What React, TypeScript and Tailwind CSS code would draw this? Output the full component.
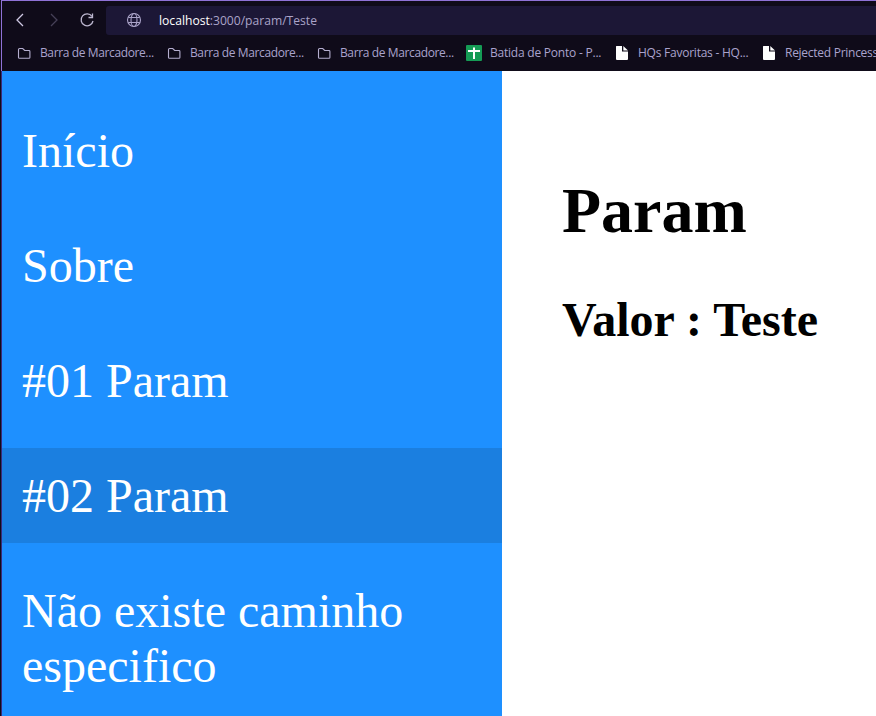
import React from "react";

type IconKind = "folder" | "sheet" | "file";

interface Bookmark {
  label: string;
  icon: IconKind;
  box: string;
  text: string;
}

const bookmarks: Bookmark[] = [
  { label: "Barra de Marcadore...", icon: "folder", box: "w-[150px]", text: "ml-2 tracking-[-0.38px]" },
  { label: "Barra de Marcadore...", icon: "folder", box: "w-[150px]", text: "ml-2 tracking-[-0.38px]" },
  { label: "Barra de Marcadore...", icon: "folder", box: "w-[150px]", text: "ml-2 tracking-[-0.38px]" },
  { label: "Batida de Ponto - P...", icon: "sheet", box: "w-[148px]", text: "ml-2 tracking-[-0.22px]" },
  { label: "HQs Favoritas - HQ...", icon: "file", box: "w-[147px]", text: "ml-[9px] tracking-[-0.24px]" },
  { label: "Rejected Princess", icon: "file", box: "w-[147px]", text: "ml-[9px] tracking-[-0.27px]" },
];

const links = ["Início", "Sobre", "#01 Param", "#02 Param", "Não existe caminho especifico"];

function BookmarkIcon({ kind }: { kind: IconKind }) {
  if (kind === "folder") {
    return (
      <svg className="h-4 w-4 shrink-0" viewBox="0 0 16 16" fill="none" stroke="#b5afd0" strokeWidth="1.1">
        <path d="M2.500 12.500v-8q0-1 1-1h3.200l2 2h4.300q.9 0 .9.9v6q0 .9-.9.9H3.500q-1 0-1-.8Z" />
      </svg>
    );
  }
  if (kind === "sheet") {
    return (
      <svg className="h-4 w-4 shrink-0" viewBox="0 0 16 16">
        <rect width="16" height="16" rx="1" fill="#159b55" />
        <path d="M2 5h12v2H9v7H7V7H2ZM7 2.500h2V6H7Z" fill="#fff" />
      </svg>
    );
  }
  return (
    <svg className="h-4 w-[15px] shrink-0" viewBox="0 0 15 16">
      <path d="M2.500 1H8v5.500h6V14q0 1-1 1H3q-1 0-1-1V1.500q0-.5.5-.5Z" fill="#fff" />
      <path d="M9.300 1 14 5.500H9.300Z" fill="#fff" />
    </svg>
  );
}

function Toolbar() {
  return (
    <div className="flex h-[33px] items-center pt-[5px] pl-3">
      <svg className="h-4 w-4" viewBox="0 0 16 16" fill="none" stroke="#cfc8e4" strokeWidth="1.300">
        <path d="M9 2 3 8l6 6" />
      </svg>
      <svg className="ml-[17px] h-4 w-4" viewBox="0 0 16 16" fill="none" stroke="#464057" strokeWidth="1.300">
        <path d="m4 2 6 6-6 6" />
      </svg>
      <svg className="ml-[16px] h-4 w-4" viewBox="0 0 16 16" fill="none" stroke="#bdb7cf" strokeWidth="1.300">
        <path d="M13 4.300A6 6 0 1 0 14 9" />
        <path d="M13.500 1.500V5.500H9.500" />
      </svg>
      <div className="ml-[11px] flex h-[29px] flex-1 items-center rounded-l-[3px] bg-[#1c1736] pl-[20px]">
        <svg className="h-4 w-4" viewBox="0 0 16 16" fill="none" stroke="#aaa3c8" strokeWidth="1.100">
          <circle cx="8" cy="8" r="6.500" />
          <ellipse cx="8" cy="8" rx="3" ry="6.500" />
          <path d="M2.300 5.500h11.400M2.300 10.500h11.400" />
        </svg>
        <svg className="ml-[17px] h-5 w-[160px] overflow-visible text-[12.500px]" fill="#aaa3c8">
          <text x="0" y="14.500" textLength="158" lengthAdjust="spacingAndGlyphs">
            <tspan fill="#fff">localhost</tspan>:3000/param/Teste
          </text>
        </svg>
      </div>
    </div>
  );
}

export default function App() {
  return (
    <div className="flex h-[716px] w-[876px] flex-col overflow-hidden bg-[#0f0b19]">
      <header className="ml-px h-[71px] shrink-0 overflow-hidden border-t border-l border-[#8f72d6] font-['Open_Sans',sans-serif]">
        <Toolbar />
        <nav className="mt-[11px] flex h-4 items-center pl-[14px] text-[12px] text-[#aaa3cd]">
          {bookmarks.map((item, index) => (
            <div key={index} className={`flex shrink-0 items-center ${item.box}`}>
              <BookmarkIcon kind={item.icon} />
              <span className={`whitespace-nowrap ${item.text}`}>{item.label}</span>
            </div>
          ))}
        </nav>
      </header>
      <div className="ml-px flex min-h-0 flex-1 border-l border-[#3c2b78] font-['Liberation_Serif',serif]">
        <aside className="w-[500px] shrink-0 bg-[#1e90ff] pt-8 text-[48px] leading-[55px] text-white [font-variant-ligatures:none]">
          <ul className="flex flex-col gap-5">
            {links.map((link) => (
              <li key={link} className={link === "#02 Param" ? "bg-[#1b7fe0] p-5" : "p-5"}>
                {link}
              </li>
            ))}
          </ul>
        </aside>
        <main className="flex-1 bg-white pt-[103px] pl-[60px] text-black">
          <h1 className="text-[64px] leading-[74px] font-bold">Param</h1>
          <h2 className="mt-[44px] text-[48px] leading-[55px] font-bold">Valor : Teste</h2>
        </main>
      </div>
    </div>
  );
}
